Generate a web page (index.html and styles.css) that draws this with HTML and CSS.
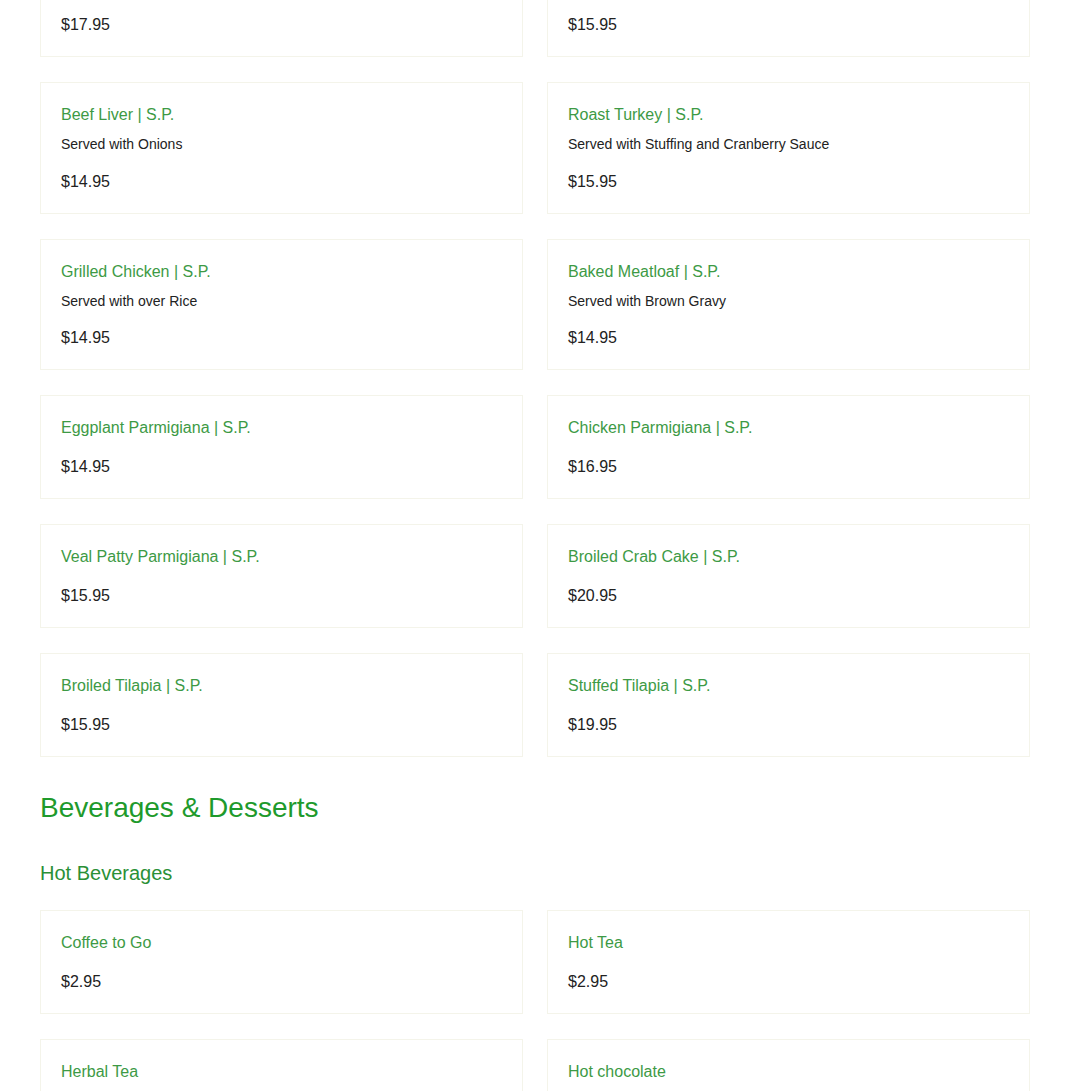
FILE: index.html
```html
<!DOCTYPE html>
<html lang="en">
<head>
<meta charset="utf-8">
<title>Menu</title>
<link rel="stylesheet" href="styles.css">
</head>
<body>
<main class="menu">
  <section class="grid first">
    <div class="card"><p class="price top">$17.95</p></div>
    <div class="card"><p class="price top">$15.95</p></div>
    <div class="card"><h4 class="item">Beef Liver | S.P.</h4><p class="desc">Served with Onions</p><p class="price">$14.95</p></div>
    <div class="card"><h4 class="item">Roast Turkey | S.P.</h4><p class="desc">Served with Stuffing and Cranberry Sauce</p><p class="price">$15.95</p></div>
    <div class="card"><h4 class="item">Grilled Chicken | S.P.</h4><p class="desc">Served with over Rice</p><p class="price">$14.95</p></div>
    <div class="card"><h4 class="item">Baked Meatloaf | S.P.</h4><p class="desc">Served with Brown Gravy</p><p class="price">$14.95</p></div>
    <div class="card"><h4 class="item">Eggplant Parmigiana | S.P.</h4><p class="price">$14.95</p></div>
    <div class="card"><h4 class="item">Chicken Parmigiana | S.P.</h4><p class="price">$16.95</p></div>
    <div class="card"><h4 class="item">Veal Patty Parmigiana | S.P.</h4><p class="price">$15.95</p></div>
    <div class="card"><h4 class="item">Broiled Crab Cake | S.P.</h4><p class="price">$20.95</p></div>
    <div class="card"><h4 class="item">Broiled Tilapia | S.P.</h4><p class="price">$15.95</p></div>
    <div class="card"><h4 class="item">Stuffed Tilapia | S.P.</h4><p class="price">$19.95</p></div>
  </section>

  <h2 class="section-title">Beverages &amp; Desserts</h2>
  <h3 class="sub-title">Hot Beverages</h3>
  <section class="grid">
    <div class="card"><h4 class="item">Coffee to Go</h4><p class="price">$2.95</p></div>
    <div class="card"><h4 class="item">Hot Tea</h4><p class="price">$2.95</p></div>
    <div class="card"><h4 class="item">Herbal Tea</h4><p class="price">$2.95</p></div>
    <div class="card"><h4 class="item">Hot chocolate</h4><p class="price">$2.95</p></div>
  </section>
</main>
</body>
</html>
```

FILE: styles.css
```css
html, body {
  margin: 0;
  padding: 0;
  background: #ffffff;
}

body {
  font-family: "Liberation Sans", Arial, sans-serif;
  color: #222222;
}

.menu {
  width: 990px;
  margin: -8px auto 0;
}

.grid {
  display: grid;
  grid-template-columns: 483px 483px;
  column-gap: 24px;
  row-gap: 25px;
}

.card {
  border: 1px solid #f4f4ea;
  padding: 20px 20px 19px;
  background: #ffffff;
}

.item {
  margin: 0;
  font-size: 16px;
  font-weight: normal;
  line-height: 24px;
  color: #3d9a45;
}

.desc {
  margin: 8px 0 0;
  font-size: 14px;
  line-height: 19.5px;
  color: #222222;
}

.price {
  margin: 15px 0 0;
  font-size: 16px;
  line-height: 24px;
  color: #222222;
}

.price.top {
  margin-top: 0;
}

.section-title {
  margin: 35px 0 0;
  font-size: 28px;
  font-weight: normal;
  line-height: 32px;
  color: #1e9a2c;
}

.sub-title {
  margin: 37px 0 25px;
  font-size: 20px;
  font-weight: normal;
  line-height: 24px;
  color: #2a9036;
}
```
